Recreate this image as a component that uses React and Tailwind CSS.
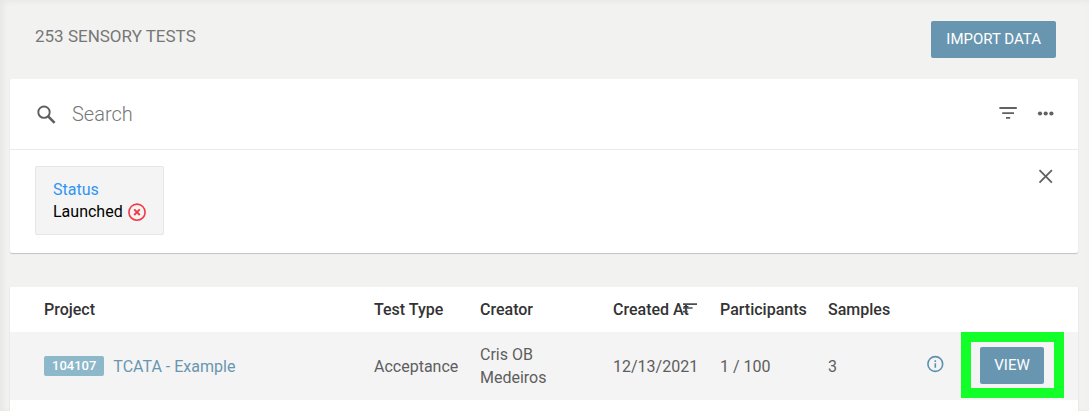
import React, { useState } from "react";

const tests = [
  {
    id: 104107,
    name: "TCATA - Example",
    type: "Acceptance",
    creator: "Cris OB Medeiros",
    createdAt: "12/13/2021",
    participants: "1 / 100",
    samples: 3,
    highlighted: true,
  },
];

const SearchIcon = () => (
  <svg className="h-5 w-5" viewBox="0 0 20 20" fill="none" stroke="#5e5e5e">
    <circle cx="8" cy="8.2" r="5.7" strokeWidth="1.9" />
    <path d="M12.2 12.4L18.6 18.8" strokeWidth="2.6" />
  </svg>
);

const FilterIcon = () => (
  <svg className="h-5 w-5" viewBox="0 0 20 20" fill="#5f6164">
    <path d="M1.4 3h17.4v2H1.4zM4.2 8.2h11.8v1.8H4.2zM8 13h4.2v1.8H8z" />
  </svg>
);

const MoreIcon = () => (
  <svg className="h-5 w-5" viewBox="0 0 20 20" fill="#5f6164">
    <circle cx="4" cy="9.5" r="2.1" />
    <circle cx="9.7" cy="9.5" r="2.1" />
    <circle cx="15.4" cy="9.5" r="2.1" />
  </svg>
);

const CloseIcon = () => (
  <svg className="h-5 w-5" viewBox="0 0 20 20" fill="none" stroke="#5f6164">
    <path d="M3.5 4.2l12.4 12.4M15.9 4.2L3.5 16.6" strokeWidth="1.8" />
  </svg>
);

const RemoveIcon = () => (
  <svg className="h-5 w-5" viewBox="0 0 20 20" fill="none" stroke="#f03a47">
    <circle cx="10" cy="10.2" r="8.1" strokeWidth="1.6" />
    <path d="M7.2 7.4l5.6 5.6M12.8 7.4l-5.6 5.6" strokeWidth="1.9" />
  </svg>
);

const SortIcon = () => (
  <svg className="h-4 w-4" viewBox="0 0 16 16" fill="#4b4d4f">
    <path d="M1 3.3h14v1.8H1zM1 7.2h9.6v1.6H1zM1 10.8h4.6v1.6H1z" />
  </svg>
);

const InfoIcon = () => (
  <svg className="h-5 w-5" viewBox="0 0 20 20" fill="none" stroke="#5d8fae">
    <circle cx="10.3" cy="9" r="7.4" strokeWidth="1.6" />
    <path d="M10.3 8.2v4.6M10.3 5.2v1.7" strokeWidth="1.6" />
  </svg>
);

const App = () => {
  const [searchTerm, setSearchTerm] = useState("");
  const [showFilters, setShowFilters] = useState(true);
  const [status, setStatus] = useState("Launched");

  return (
    <div className="flex min-h-screen flex-col bg-[#f2f2f0] pl-[10px] pr-[11px] font-['Roboto',sans-serif] text-base text-[#5e5e5e] shadow-[inset_3px_1px_6px_rgba(0,0,0,0.05)]">
      {/* Title bar */}
      <header className="flex items-start justify-between pt-[21px] pb-[21px] pl-[25px] pr-[22px]">
        <h1 className="pt-[3px] text-[17px] leading-6 text-[#777777]">
          253 SENSORY TESTS
        </h1>
        <button className="h-[37px] rounded-xs bg-[#6896b1] px-[15px] text-[15px] text-white">
          IMPORT DATA
        </button>
      </header>

      {/* Search and filters */}
      <section className="rounded-xs bg-white shadow-[0_1px_1px_rgba(0,0,0,0.2)]">
        <div className="flex h-[71px] items-center border-b border-[#ebebeb] pl-[26px] pr-[22px]">
          <label htmlFor="search" aria-label="Search">
            <SearchIcon />
          </label>
          <input
            id="search"
            type="text"
            placeholder="Search"
            value={searchTerm}
            onChange={(e) => setSearchTerm(e.target.value)}
            className="ml-4 min-w-0 flex-1 text-xl font-light placeholder:text-[#777777] focus:outline-none"
          />
          <button aria-label="Filter" onClick={() => setShowFilters(true)}>
            <FilterIcon />
          </button>
          <button aria-label="More" className="ml-[18px]">
            <MoreIcon />
          </button>
        </div>

        {showFilters && (
          <div className="flex items-start justify-between pt-4 pb-[18px] pl-[25px] pr-[22px]">
            {status && (
              <div className="rounded-xs border border-[#e6e6e6] bg-[#f4f4f4] pt-3 pb-[11px] pl-[17px] pr-4 leading-[22px]">
                <div className="text-[#2f95f3]">Status</div>
                <div className="flex items-center gap-1 text-black">
                  {status}
                  <button
                    aria-label="Remove status filter"
                    onClick={() => setStatus("")}
                  >
                    <RemoveIcon />
                  </button>
                </div>
              </div>
            )}
            <button
              aria-label="Close filters"
              className="ml-auto"
              onClick={() => setShowFilters(false)}
            >
              <CloseIcon />
            </button>
          </div>
        )}
      </section>

      {/* Tests table */}
      <section className="mt-[34px] flex-1 bg-white shadow-[0_1px_1px_rgba(0,0,0,0.2)]">
        <table className="w-full table-fixed text-left">
          <colgroup>
            <col />
            <col className="w-[106px]" />
            <col className="w-[133px]" />
            <col className="w-[107px]" />
            <col className="w-[108px]" />
            <col className="w-[97px]" />
            <col className="w-[153px]" />
          </colgroup>
          <thead>
            <tr className="h-[45px] text-[#333333]">
              <th className="pl-[34px] font-medium">Project</th>
              <th className="font-medium">Test Type</th>
              <th className="font-medium">Creator</th>
              <th className="font-medium">
                <span className="relative">
                  Created At
                  <span className="absolute top-0 -right-[9px]">
                    <SortIcon />
                  </span>
                </span>
              </th>
              <th className="font-medium">Participants</th>
              <th className="font-medium">Samples</th>
              <th></th>
            </tr>
          </thead>
          <tbody>
            {tests.map((test) => (
              <tr key={test.id} className="h-[68px] bg-[#f4f4f4] leading-[23px]">
                <td className="pl-[34px]">
                  <a
                    href="#test"
                    className="flex items-center gap-[9px] text-[#6896b1]"
                  >
                    <span className="rounded-xs bg-[#8db8ca] px-2 text-[13px] leading-5 font-medium text-white">
                      {test.id}
                    </span>
                    {test.name}
                  </a>
                </td>
                <td>{test.type}</td>
                <td className="pr-12">{test.creator}</td>
                <td>{test.createdAt}</td>
                <td>{test.participants}</td>
                <td>{test.samples}</td>
                <td className="pr-[34px] pb-[2px]">
                  <div className="flex items-center justify-between">
                    <button aria-label="Test details">
                      <InfoIcon />
                    </button>
                    <div className="relative">
                      <button className="block h-[37px] w-16 rounded-xs bg-[#6896b1] text-[15px] text-white">
                        VIEW
                      </button>
                      {test.highlighted && (
                        <div className="pointer-events-none absolute -top-[15px] -right-5 -bottom-[14px] -left-[19px] border-10 border-[#12ff2a]"></div>
                      )}
                    </div>
                  </div>
                </td>
              </tr>
            ))}
          </tbody>
        </table>
      </section>
    </div>
  );
};

export default App;
